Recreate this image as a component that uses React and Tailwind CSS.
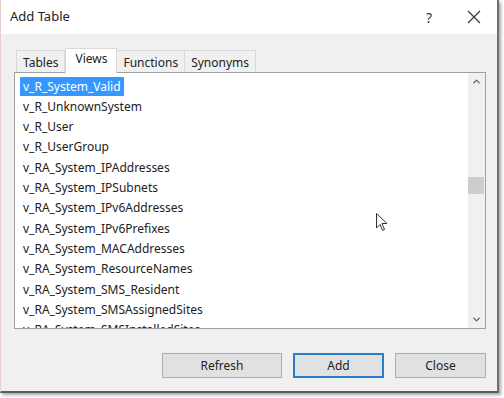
import { ChevronUp, ChevronDown } from "lucide-react";

const views = [
  "v_R_System_Valid",
  "v_R_UnknownSystem",
  "v_R_User",
  "v_R_UserGroup",
  "v_RA_System_IPAddresses",
  "v_RA_System_IPSubnets",
  "v_RA_System_IPv6Addresses",
  "v_RA_System_IPv6Prefixes",
  "v_RA_System_MACAddresses",
  "v_RA_System_ResourceNames",
  "v_RA_System_SMS_Resident",
  "v_RA_System_SMSAssignedSites",
  "v_RA_System_SMSInstalledSites",
];

const tabs = ["Tables", "Views", "Functions", "Synonyms"];

const App = () => {
  return (
    <div className="w-[504px] h-[398px] bg-white overflow-hidden relative" style={{ fontFamily: '"Noto Sans", "Open Sans", sans-serif' }}>
      {/* Dialog window */}
      <div className="w-[499px] h-[393px] flex flex-col border-l border-[#e6cfd2] border-r-2 border-r-[#707070] border-b-2 border-b-[#5c5c5c] shadow-[2px_2px_3px_rgba(0,0,0,0.35)]">
        {/* Title bar */}
        <div className="h-[34px] shrink-0 bg-white flex items-center pl-[9px] text-[13px] text-[#222]">
          <span className="flex-1">Add Table</span>
          <span className="w-[20px] text-center mr-[28px] text-[14px] text-[#333]">?</span>
          <svg width="14" height="14" viewBox="0 0 14 14" className="mr-[16px]">
            <path d="M1 1 L13 13 M13 1 L1 13" stroke="#333" strokeWidth="1.1" />
          </svg>
        </div>

        {/* Body */}
        <div className="flex-1 bg-[#f0f0f0] flex flex-col pl-[13px] pr-[11px] pt-[13px]">
          {/* Tabs */}
          <div className="flex items-end h-[25px] pl-[2px]">
            {tabs.map((t) =>
              t === "Views" ? (
                <div key={t} className="h-[25px] px-[9px] bg-white border border-[#d9d9d9] border-b-0 -mb-px relative z-10 text-[12px] text-[#222] leading-[19px]">
                  {t}
                </div>
              ) : (
                <div key={t} className="h-[22px] px-[6px] bg-[#f0f0f0] border border-[#d9d9d9] border-b-0 -ml-px first:ml-0 text-[12px] text-[#222] leading-[23px]">
                  {t}
                </div>
              )
            )}
          </div>

          {/* List box */}
          <div className="h-[257px] bg-white border border-[#a0a0a0] flex">
            <div className="flex-1 overflow-hidden pl-[5px] pt-[3px]">
              {views.map((v, i) => (
                <div key={v} className="h-[20.35px] flex items-center text-[12px] text-[#222]">
                  <span className={i === 0 ? "bg-[#3399ff] text-white px-[3px] h-[19px] leading-[19px]" : "px-[3px]"}>{v}</span>
                </div>
              ))}
            </div>
            {/* Scrollbar */}
            <div className="w-[17px] bg-[#f0f0f0] flex flex-col items-center">
              <div className="h-[17px] flex items-center justify-center">
                <ChevronUp size={11} strokeWidth={3} className="text-[#606060]" />
              </div>
              <div className="flex-1 w-full relative">
                <div className="absolute left-0 right-[1px] top-[87px] h-[17px] bg-[#cdcdcd]" />
              </div>
              <div className="h-[17px] flex items-center justify-center">
                <ChevronDown size={11} strokeWidth={3} className="text-[#606060]" />
              </div>
            </div>
          </div>

          {/* Buttons */}
          <div className="flex justify-end gap-[11px] pt-[24px] text-[12px] text-[#222]">
            <button className="w-[120px] h-[25px] bg-[#e1e1e1] border border-[#adadad]">Refresh</button>
            <button className="w-[91px] h-[25px] bg-[#e1e1e1] border-2 border-[#2a7ccc]">Add</button>
            <button className="w-[91px] h-[25px] bg-[#e1e1e1] border border-[#adadad]">Close</button>
          </div>
        </div>
      </div>

      {/* Mouse cursor */}
      <svg className="absolute left-[376px] top-[213px]" width="12" height="19" viewBox="0 0 12 19">
        <path d="M0.5 0.5 L0.5 15 L4 11.5 L6.5 17.5 L8.5 16.5 L6 10.5 L11 10.5 Z" fill="white" stroke="#333" strokeWidth="1" />
      </svg>
    </div>
  );
};

export default App;
